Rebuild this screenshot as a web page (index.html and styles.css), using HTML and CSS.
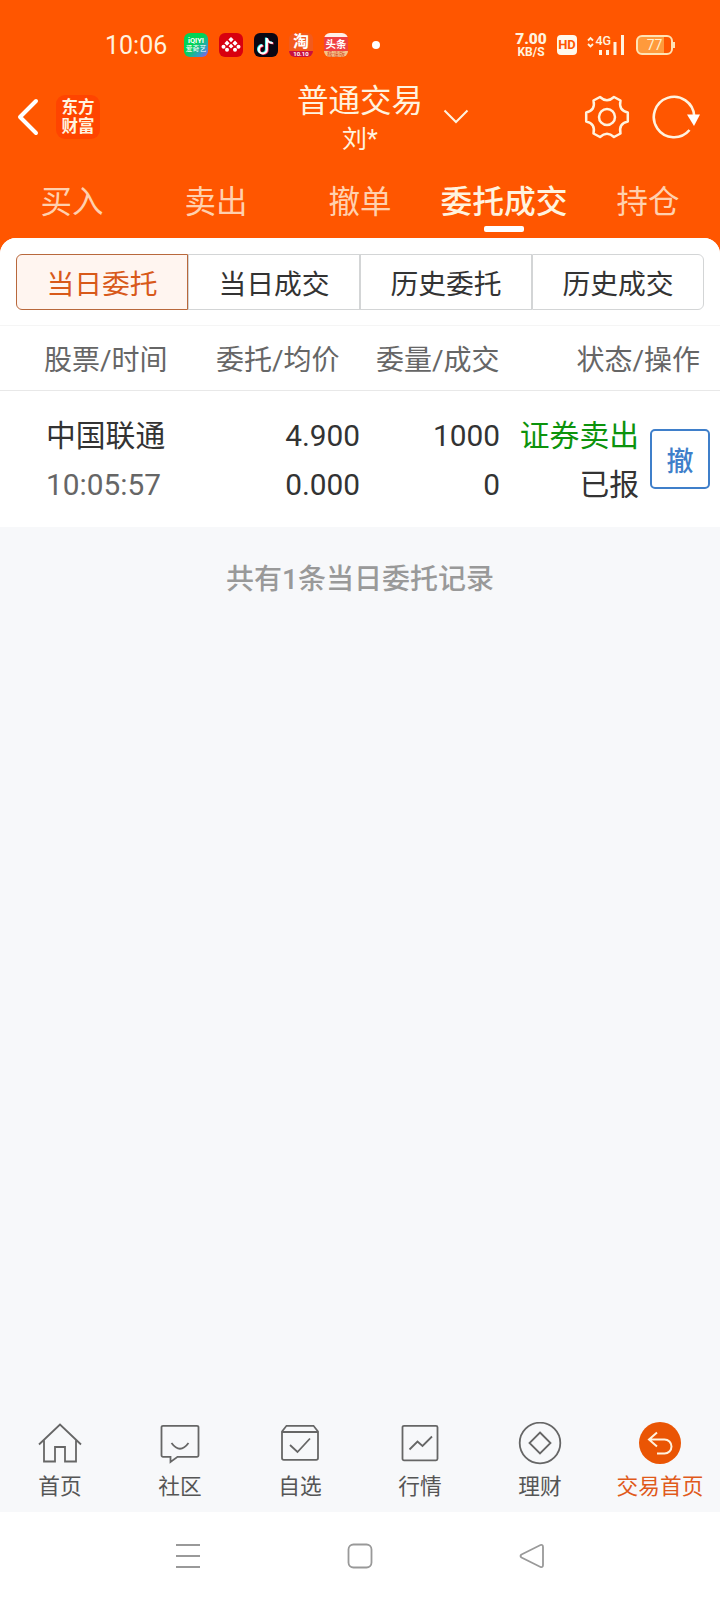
FILE: index.html
```html
<!DOCTYPE html>
<html lang="zh-CN">
<head>
    <meta charset="UTF-8">
    <meta name="viewport" content="width=device-width, initial-scale=1.0">
    <title>普通交易</title>
    <link rel="stylesheet" href="styles.css">
</head>
<body>
    <!-- Status Bar -->
    <div class="status-bar">
        <span class="time">10:06</span>
        <div class="apps">
            <span class="app iqiyi"><b>iQIYI</b><i>爱奇艺</i></span>
            <span class="app red">
                <svg width="24" height="24" viewBox="0 0 24 24" fill="#fff">
                    <path d="M12 4l2.600 2.600L12 9.200 9.400 6.600zM8 7.600l2.600 2.600L8 12.800 5.400 10.200zM16 7.600l2.600 2.600L16 12.800 13.400 10.200zM12 10.800l2.400 2.400L12 15.600 9.600 13.200z"/>
                    <circle cx="4.500" cy="13.800" r="2"/><circle cx="19.500" cy="13.800" r="2"/>
                    <circle cx="8" cy="16.800" r="2"/><circle cx="16" cy="16.800" r="2"/>
                </svg>
            </span>
            <span class="app douyin">
                <svg width="24" height="24" viewBox="0 0 24 24" fill="none" stroke-width="2.200">
                    <path stroke="#25f4ee" d="M12 4.500v11.500a4 4 0 1 1-4-4M12 4.500c.3 2.700 2.500 4.800 6 5"/>
                    <path stroke="#fe2c55" d="M13.600 5.500v11.500a4 4 0 1 1-4-4M13.600 5.500c.3 2.700 2.500 4.800 6 5"/>
                    <path stroke="#fff" d="M12.800 5V16.500a4 4 0 1 1-4-4M12.800 5c.3 2.700 2.500 4.800 6 5"/>
                </svg>
            </span>
            <span class="app taobao"><b>淘</b><i>10.10</i></span>
            <span class="app toutiao"><b>头条</b><i>极速版</i></span>
        </div>
        <span class="dot"></span>
        <div class="status-right">
            <div class="speed"><b>7.00</b><span>KB/S</span></div>
            <span class="hd">HD</span>
            <div class="signal">
                <svg width="38" height="24" viewBox="0 0 38 24">
                    <path d="M1 7.500L3.500 5 6 7.500M1 11L3.500 13.500 6 11" fill="none" stroke="#fff3df" stroke-width="1.800"/>
                    <path d="M12 17h3v5h-3zM19 17h3v5h-3zM26.500 9h3v13h-3zM34 2h3v20h-3z" fill="#fff3df"/>
                    <text x="8.500" y="12">4G</text>
                </svg>
            </div>
            <div class="battery"><span>77</span></div>
        </div>
    </div>

    <!-- Header -->
    <header>
        <div class="header-left">
            <svg width="22" height="38" viewBox="0 0 22 38" fill="none" stroke="#fff" stroke-width="4" stroke-linecap="round" stroke-linejoin="round">
                <path d="M19 3L3 19l16 16"/>
            </svg>
            <div class="logo"><span>东方</span><span>财富</span></div>
        </div>
        <div class="title">
            <h1>普通交易</h1>
            <p>刘*</p>
        </div>
        <svg class="arrow" width="26" height="16" viewBox="0 0 26 16" fill="none" stroke="#fff3df" stroke-width="2">
            <path d="M1.500 1.500L13 13 24.500 1.500"/>
        </svg>
        <div class="header-right">
            <svg width="46" height="46" viewBox="-23 -23 46 46" fill="none" stroke="#fff3df" stroke-width="2.500" stroke-linejoin="round">
                <path d="M-7 -20Q0 -13.500 7 -20L13.500 -16.500Q11.300 -6.500 20.800 -4.500V4.500Q11.300 6.500 13.500 16.500L7 20Q0 13.500 -7 20L-13.500 16.500Q-11.300 6.500 -20.800 4.500V-4.500Q-11.300 -6.500 -13.500 -16.500Z"/>
                <circle r="8"/>
            </svg>
            <svg width="50" height="46" viewBox="-23 -23 50 46">
                <path d="M15.500 13A20.200 20.200 0 1 1 20.200 -1" fill="none" stroke="#fff3df" stroke-width="2.600"/>
                <path d="M13 -2.500H26L20 9z" fill="#fff"/>
            </svg>
        </div>
    </header>

    <!-- Trade Tabs -->
    <nav class="tabs">
        <a>买入</a>
        <a>卖出</a>
        <a>撤单</a>
        <a class="active">委托成交</a>
        <a>持仓</a>
    </nav>

    <!-- Main Content -->
    <main>
        <section class="panel">
            <div class="segments">
                <button class="active">当日委托</button>
                <button>当日成交</button>
                <button>历史委托</button>
                <button>历史成交</button>
            </div>
            <div class="row table-head">
                <span>股票/时间</span>
                <span>委托/均价</span>
                <span>委量/成交</span>
                <span>状态/操作</span>
            </div>
            <div class="row order">
                <div><span>中国联通</span><span class="muted">10:05:57</span></div>
                <div><span>4.900</span><span>0.000</span></div>
                <div><span>1000</span><span>0</span></div>
                <div><span class="sell">证券卖出</span><span>已报</span></div>
                <button class="cancel">撤</button>
            </div>
        </section>
        <p class="total">共有1条当日委托记录</p>
    </main>

    <!-- Bottom Menu -->
    <nav class="bottom-nav">
        <a>
            <svg width="46" height="44" viewBox="0 0 46 44">
                <path d="M2 22.500L23 2.500l21 20M7 18.500v21h11V25h10v14.500h11v-21"/>
            </svg>
            首页
        </a>
        <a>
            <svg width="46" height="44" viewBox="0 0 46 44">
                <path d="M6 3.800h34a1.500 1.500 0 0 1 1.500 1.500v28a1.500 1.500 0 0 1-1.500 1.500H20.500L13.500 40V34.800H6A1.500 1.500 0 0 1 4.500 33.300V5.300A1.500 1.500 0 0 1 6 3.800zM14.500 21q8.500 11.500 17 0"/>
            </svg>
            社区
        </a>
        <a>
            <svg width="46" height="44" viewBox="0 0 46 44">
                <path d="M5 9.500L9.500 3.800h27L41 9.500V36a1.800 1.800 0 0 1-1.800 1.800H6.800A1.800 1.800 0 0 1 5 36zM5 10h36M13 23l7.500 7L33 16.500"/>
            </svg>
            自选
        </a>
        <a>
            <svg width="46" height="44" viewBox="0 0 46 44">
                <rect x="5.500" y="3.800" width="35" height="34.500" rx="1.500"/>
                <path d="M12.500 27.500l8-8 5 4.500L35 14.500"/>
            </svg>
            行情
        </a>
        <a>
            <svg width="46" height="44" viewBox="0 0 46 44">
                <circle cx="23" cy="21" r="20.300"/>
                <path d="M23 10.500L33.500 21 23 31.500 12.500 21z"/>
            </svg>
            理财
        </a>
        <a class="active">
            <svg width="46" height="44" viewBox="0 0 46 44">
                <circle cx="23" cy="21" r="21"/>
                <path d="M20 10.500L12 17.500l8 7M12 17.500H27.500a7 7 0 0 1 0 14H20"/>
            </svg>
            交易首页
        </a>
    </nav>

    <!-- System Keys -->
    <div class="system-nav">
        <svg width="26" height="26" viewBox="0 0 26 26"><path d="M1 2h24M1 13h24M1 24h24"/></svg>
        <svg width="26" height="26" viewBox="0 0 26 26"><rect x="1.500" y="1.500" width="23" height="23" rx="5"/></svg>
        <svg width="26" height="26" viewBox="0 0 26 26"><path d="M2.500 11.500L21.500 2Q24 1.300 24 4V22Q24 24.700 21.500 24L2.500 14.500Q.5 13 2.500 11.500z"/></svg>
    </div>
</body>
</html>
```
FILE: styles.css
```css
* {
    box-sizing: border-box;
}

body {
    font-family: Roboto, "Noto Sans CJK SC", sans-serif;
    margin: 0;
    height: 1600px;
    display: flex;
    flex-direction: column;
    background-color: #ff5600;
    color: #333;
    overflow: hidden;
}

h1, p {
    margin: 0;
    font-weight: normal;
}

svg {
    display: block;
    flex: none;
}

button {
    font-family: inherit;
    padding: 0;
    background: none;
    color: inherit;
}

/* Status bar */
.status-bar {
    height: 77px;
    padding: 13px 47px 0 105px;
    display: flex;
    align-items: center;
    color: #fff3df;
}

.time {
    width: 79px;
    font-size: 25px;
}

.apps {
    display: flex;
    gap: 11px;
}

.app {
    width: 24px;
    height: 24px;
    border-radius: 6px;
    overflow: hidden;
    display: flex;
    flex-direction: column;
    align-items: center;
    justify-content: center;
    color: white;
    white-space: nowrap;
}

.app i {
    font-style: normal;
}

.iqiyi {
    background: linear-gradient(135deg, #00d455 45%, #2f9fc0 75%, #a050f0);
    font-size: 6.8px;
    line-height: 8px;
}

.iqiyi b {
    font-size: 7.5px;
}

.red {
    background-color: #d8000f;
}

.douyin {
    background-color: #0b0713;
}

.taobao {
    background: linear-gradient(#f25a1d 74%, #c8103e 74%);
}

.taobao b {
    font-size: 16px;
    line-height: 17px;
}

.taobao i {
    font-size: 6px;
    font-weight: bold;
    line-height: 7px;
}

.toutiao {
    background: linear-gradient(#fff0e8 18%, #f04142 18%, #f04142 76%, #f5c48a 76%);
}

.toutiao b {
    font-size: 10.5px;
    line-height: 13px;
    margin-top: 4px;
}

.toutiao i {
    font-size: 6px;
    line-height: 6px;
    color: #d5502a;
}

.dot {
    width: 8px;
    height: 8px;
    margin-left: 24px;
    border-radius: 50%;
    background-color: white;
}

.status-right {
    margin-left: auto;
    display: flex;
    align-items: center;
}

.speed {
    width: 32px;
    margin-right: 10px;
    display: flex;
    flex-direction: column;
    align-items: center;
    font-weight: bold;
    font-size: 12px;
    line-height: 12px;
}

.speed b {
    font-size: 15.5px;
    line-height: 14px;
}

.hd {
    width: 20px;
    height: 20px;
    margin-right: 10px;
    border-radius: 4px;
    background-color: #fff8ec;
    color: #ff5600;
    font-size: 13px;
    font-weight: bold;
    line-height: 20px;
    text-align: center;
}

.signal {
    margin-right: 11px;
}

.signal text {
    font-size: 12.5px;
    font-weight: 500;
    fill: #fff3df;
}

.battery {
    position: relative;
    width: 37px;
    height: 20px;
    border: 2px solid #ffe3b5;
    border-radius: 6px;
    background: linear-gradient(90deg, #ff9a3c 80%, transparent 80%);
    color: #fff0cf;
    font-size: 14px;
    line-height: 16px;
    text-align: center;
}

.battery::after {
    content: "";
    position: absolute;
    right: -4px;
    top: 5px;
    width: 2px;
    height: 6px;
    background-color: #ffe3b5;
}

/* Header */
header {
    height: 80px;
    display: grid;
    grid-template-columns: 283px 154px 127px 1fr;
    align-items: center;
}

.header-left {
    display: flex;
    align-items: center;
    padding-left: 17px;
}

.logo {
    width: 44px;
    height: 44px;
    margin-left: 17px;
    border-radius: 9px;
    background-color: #ff4400;
    color: #fff3df;
    display: flex;
    flex-direction: column;
    align-items: center;
    justify-content: center;
    font-size: 16.5px;
    font-weight: bold;
    line-height: 19px;
}

.title {
    padding-top: 4px;
    text-align: center;
    color: #fff3df;
}

.title h1 {
    font-size: 31.5px;
    line-height: 42px;
}

.title p {
    font-size: 25px;
    line-height: 34px;
}

.arrow {
    margin-left: 6px;
}

.header-right {
    display: flex;
    gap: 21px;
    padding-left: 20px;
}

/* Tabs */
.tabs {
    height: 81px;
    padding-top: 13px;
    display: grid;
    grid-template-columns: repeat(5, 144px);
}

.tabs a {
    position: relative;
    text-align: center;
    font-size: 31.5px;
    line-height: 65px;
    color: #ffd0ae;
}

.tabs .active {
    color: #fff3df;
    font-size: 31.8px;
    font-weight: 500;
}

.tabs .active::after {
    content: "";
    position: absolute;
    left: 52px;
    bottom: 6px;
    width: 40px;
    height: 6px;
    border-radius: 2px;
    background-color: white;
}

/* Orders */
main {
    flex: 1;
    background-color: #f7f8fa;
    border-radius: 16px 16px 0 0;
    overflow: hidden;
}

.panel {
    background-color: white;
}

.segments {
    height: 88px;
    padding: 16px 16px 0;
    display: flex;
    border-bottom: 1px solid #f5f5f5;
}

.segments button {
    flex: 1;
    height: 56px;
    border: 1px solid #d3d5d6;
    font-size: 27.8px;
}

.segments button:first-child {
    border-radius: 6px 0 0 6px;
}

.segments button:last-child {
    border-radius: 0 6px 6px 0;
}

.segments .active {
    border-color: #b8683c;
    background-color: #fff5f0;
    color: #d8591a;
}

.row {
    display: grid;
}

.table-head {
    height: 65px;
    padding: 0 20px 0 44px;
    grid-template-columns: 172px 160px 1fr auto;
    border-bottom: 1px solid #e8e8e8;
    font-size: 28px;
    line-height: 69px;
    color: #666;
}

.order {
    height: 136px;
    padding: 20px 10px 0 46px;
    grid-template-columns: 151px 163px 140px 139px 1fr;
    font-size: 29.8px;
    line-height: 49px;
}

.order div {
    display: flex;
    flex-direction: column;
    text-align: right;
}

.order div:first-child {
    text-align: left;
}

.order .muted {
    color: #666;
}

.order .sell {
    color: #0c930c;
}

.cancel {
    width: 60px;
    height: 60px;
    margin: 18px 0 0 auto;
    border: 2px solid #3f7fca;
    border-radius: 5px;
    color: #3f7fca;
    font-size: 27px;
    font-weight: 500;
}

.total {
    padding-top: 32px;
    text-align: center;
    font-size: 28px;
    font-weight: 500;
    line-height: 42px;
    color: #999;
}

/* Bottom menu */
.bottom-nav {
    height: 98px;
    padding-top: 8px;
    display: grid;
    grid-template-columns: repeat(6, 1fr);
    background-color: #f7f8fa;
}

.bottom-nav a {
    display: flex;
    flex-direction: column;
    align-items: center;
    font-size: 21.7px;
    line-height: 41px;
    color: #555;
}

.bottom-nav svg {
    fill: none;
    stroke: #666;
    stroke-width: 1.8;
}

.bottom-nav .active {
    color: #e05a1a;
}

.bottom-nav .active svg {
    stroke: #fff3df;
    stroke-width: 2;
}

.bottom-nav .active circle {
    fill: #ea5504;
    stroke: none;
}

.system-nav {
    height: 88px;
    padding: 0 175px;
    display: flex;
    align-items: center;
    justify-content: space-between;
    background-color: white;
}

.system-nav svg {
    fill: none;
    stroke: #999;
    stroke-width: 1.8;
}
```
